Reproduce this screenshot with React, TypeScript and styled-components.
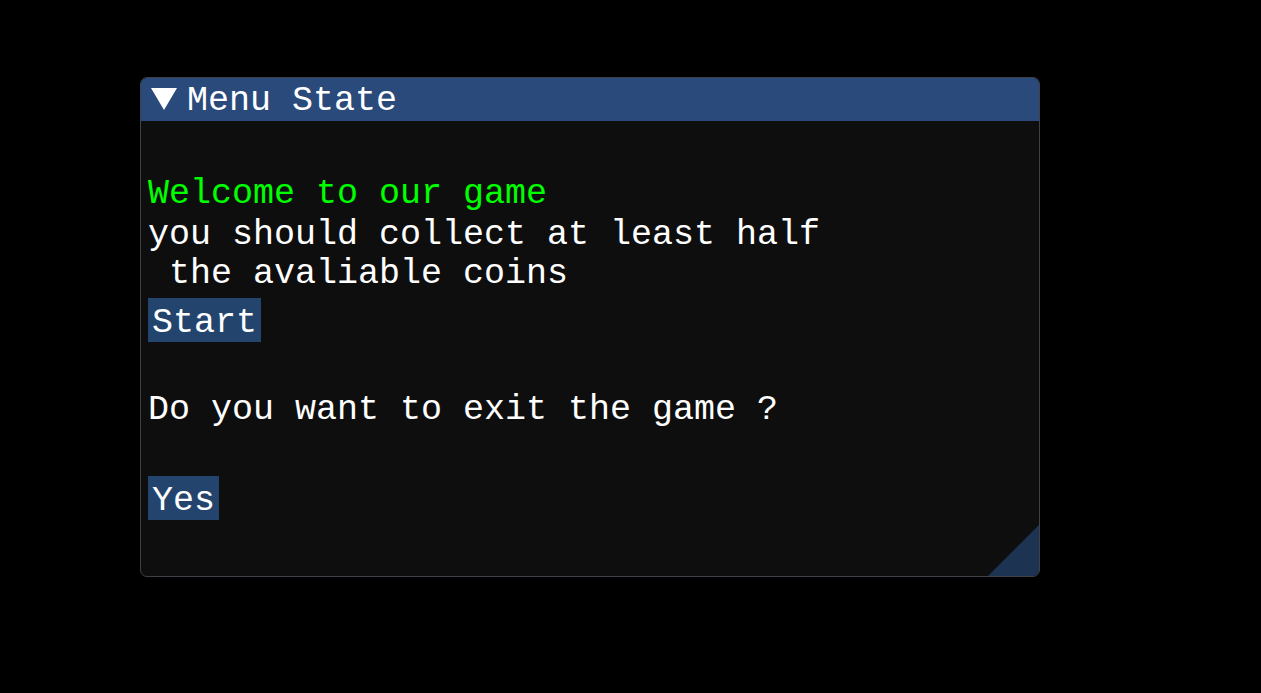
import React from "react";
import styled, { createGlobalStyle } from "styled-components";

const Global = createGlobalStyle`
  html, body { margin: 0; padding: 0; background: #000; }
  body {
    width: 1261px;
    height: 693px;
    overflow: hidden;
    font-family: "Liberation Mono", "DejaVu Sans Mono", monospace;
  }
`;

const Stage = styled.div`
  padding: 77px 0 0 140px;
`;

const Window = styled.div`
  position: relative;
  box-sizing: border-box;
  width: 900px;
  height: 500px;
  border: 1px solid #404048;
  border-radius: 7px;
  background: #0e0e0e;
  overflow: hidden;
  display: flex;
  flex-direction: column;
`;

const TitleBar = styled.div`
  box-sizing: border-box;
  height: 43px;
  flex: none;
  background: #294a7a;
  display: flex;
  align-items: flex-start;
  gap: 10px;
  padding: 4px 0 0 10px;
  color: #fff;
  font-size: 35px;
  line-height: 39px;
  white-space: pre;
`;

const Arrow = styled.svg`
  flex: none;
  margin-top: 6px;
`;

const Body = styled.div`
  display: flex;
  flex-direction: column;
  align-items: flex-start;
  padding: 54px 0 0 7px;
  font-size: 35px;
  line-height: 39px;
  color: #fff;
`;

const Line = styled.div<{ $top?: number; $color?: string }>`
  margin-top: ${(p) => p.$top ?? 0}px;
  color: ${(p) => p.$color ?? "#ffffff"};
  height: 39px;
  white-space: pre;
`;

const Button = styled.button<{ $top?: number }>`
  margin-top: ${(p) => p.$top ?? 0}px;
  box-sizing: border-box;
  height: 44px;
  padding: 6px 4px 0;
  border: none;
  border-radius: 0;
  background: #23456d;
  color: #fff;
  font-family: inherit;
  font-size: 35px;
  line-height: 38px;
  text-align: left;
  cursor: pointer;
  white-space: pre;
`;

const ResizeGrip = styled.div`
  position: absolute;
  right: 0;
  bottom: 0;
  width: 51px;
  height: 51px;
  background: #1d3352;
  clip-path: polygon(100% 0, 100% 100%, 0 100%);
`;

export default function App() {
  return (
    <>
      <Global />
      <Stage>
        <Window>
          <TitleBar>
            <Arrow width="26" height="22" viewBox="0 0 26 22">
              <polygon points="0,0 26,0 13,22" fill="#ffffff" />
            </Arrow>
            <span>Menu State</span>
          </TitleBar>
          <Body>
            <Line $color="#00ff00">Welcome to our game</Line>
            <Line $top={2}>you should collect at least half</Line>
            <Line> the avaliable coins</Line>
            <Button $top={4}>Start</Button>
            <Line $top={49}>Do you want to exit the game ?</Line>
            <Button $top={46}>Yes</Button>
          </Body>
          <ResizeGrip />
        </Window>
      </Stage>
    </>
  );
}
